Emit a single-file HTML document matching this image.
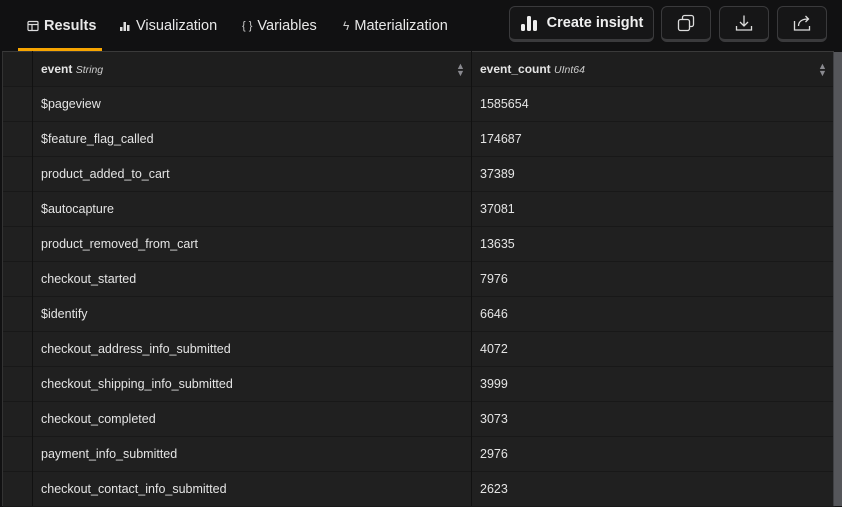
<!DOCTYPE html>
<html><head><style>
*{box-sizing:border-box;margin:0;padding:0}
body{width:842px;height:506px;overflow:hidden;background:#111112;font-family:"Liberation Sans",sans-serif;position:relative;color:#e6e6e6}
.tabs{position:absolute;left:0;top:0;height:52px;width:842px;background:#111112}
.tab{position:absolute;top:18px;font-size:14.5px;color:#e8e8e8;display:flex;align-items:center;gap:5px}
.ul{position:absolute;left:18px;top:48px;width:84px;height:3px;background:#f7a501}
.btn{position:absolute;top:6px;height:36px;border:1px solid #3a3a3c;border-bottom:3px solid #3a3a3c;border-radius:6px;background:#161617;display:flex;align-items:center;justify-content:center;color:#f0f0f0;font-size:14.5px;font-weight:bold}
.table{position:absolute;left:2px;top:51px;width:832px;height:455px;border-top:1px solid #3a3a3a;border-left:1px solid #333;background:#202020}
.row{position:absolute;left:0;width:832px;height:35px;border-bottom:1px solid #181818;font-size:12.5px;color:#e4e4e4}
.row span{position:absolute;top:10px}
.c1{left:38px}.c2{left:477px}
.hdr{background:#1e1e1e;font-weight:bold;font-size:12px}
.hdr i{font-weight:normal;font-size:10.5px;color:#ccc}
.v1{position:absolute;left:32px;top:51px;width:1px;height:455px;background:#111}
.v2{position:absolute;left:471px;top:51px;width:1px;height:455px;background:#111}
.sb{position:absolute;left:833px;top:52px;width:9px;height:454px;background:#55565a;border-left:1px solid #3f4043}
.sort{position:absolute;top:11px;color:#8a8a90;font-size:9px;line-height:7px}
</style></head><body>
<div class="tabs">
<div class="tab" style="left:27px;font-weight:bold"><svg width="12" height="12" viewBox="0 0 12 12" fill="none" stroke="#ddd" stroke-width="1.2"><rect x="1" y="1.5" width="10" height="9" rx="1"/><path d="M1 4.5h10M5 4.5v6"/></svg>Results</div>
<div class="tab" style="left:119px"><svg width="12" height="12" viewBox="0 0 12 12" fill="#ddd"><rect x="1" y="7" width="2.5" height="4"/><rect x="4.5" y="2" width="2.5" height="9"/><rect x="8" y="5" width="2.5" height="6"/></svg>Visualization</div>
<div class="tab" style="left:242px"><span style="font-size:11px;color:#ccc">{ }</span>Variables</div>
<div class="tab" style="left:343px"><span style="font-size:12px;color:#ccc">ϟ</span> Materialization</div>
<div class="ul"></div>
<div class="btn" style="left:509px;width:145px;gap:9px"><svg width="18" height="16" viewBox="0 0 18 16" fill="#eee"><rect x="1" y="9" width="4" height="7" rx="1.5"/><rect x="7" y="1" width="4" height="15" rx="1.5"/><rect x="13" y="5" width="4" height="11" rx="1.5"/></svg>Create insight</div>
<div class="btn" style="left:661px;width:50px"><svg width="18" height="18" viewBox="0 0 18 18" fill="none" stroke="#ddd" stroke-width="1.3"><rect x="1.5" y="5.5" width="11" height="11" rx="2"/><path d="M5.5 5V3.5a2 2 0 0 1 2-2h7a2 2 0 0 1 2 2v7a2 2 0 0 1-2 2H13"/></svg></div>
<div class="btn" style="left:719px;width:50px"><svg width="18" height="18" viewBox="0 0 18 18" fill="none" stroke="#ddd" stroke-width="1.3"><path d="M9 1.5v10M5 8l4 4 4-4M1.5 12v4h15v-4"/></svg></div>
<div class="btn" style="left:777px;width:50px"><svg width="18" height="18" viewBox="0 0 18 18" fill="none" stroke="#ddd" stroke-width="1.3"><path d="M1.5 7v9h15v-4M5.5 12c0-5 4-7 10-7M12.5 2l3 3-3 3"/></svg></div>
</div>
<div class="table">
<div class="row hdr" style="top:0;height:35px"><span class="c1">event <i>String</i></span><div class="sort" style="left:453px">▲<br>▼</div><span class="c2">event_count <i>UInt64</i></span><div class="sort" style="left:815px">▲<br>▼</div></div>
<div class="row" style="top:35px"><span class="c1">$pageview</span><span class="c2">1585654</span></div>
<div class="row" style="top:70px"><span class="c1">$feature_flag_called</span><span class="c2">174687</span></div>
<div class="row" style="top:105px"><span class="c1">product_added_to_cart</span><span class="c2">37389</span></div>
<div class="row" style="top:140px"><span class="c1">$autocapture</span><span class="c2">37081</span></div>
<div class="row" style="top:175px"><span class="c1">product_removed_from_cart</span><span class="c2">13635</span></div>
<div class="row" style="top:210px"><span class="c1">checkout_started</span><span class="c2">7976</span></div>
<div class="row" style="top:245px"><span class="c1">$identify</span><span class="c2">6646</span></div>
<div class="row" style="top:280px"><span class="c1">checkout_address_info_submitted</span><span class="c2">4072</span></div>
<div class="row" style="top:315px"><span class="c1">checkout_shipping_info_submitted</span><span class="c2">3999</span></div>
<div class="row" style="top:350px"><span class="c1">checkout_completed</span><span class="c2">3073</span></div>
<div class="row" style="top:385px"><span class="c1">payment_info_submitted</span><span class="c2">2976</span></div>
<div class="row" style="top:420px"><span class="c1">checkout_contact_info_submitted</span><span class="c2">2623</span></div>
</div>
<div class="v1"></div><div class="v2"></div>
<div class="sb"></div>
</body></html>
